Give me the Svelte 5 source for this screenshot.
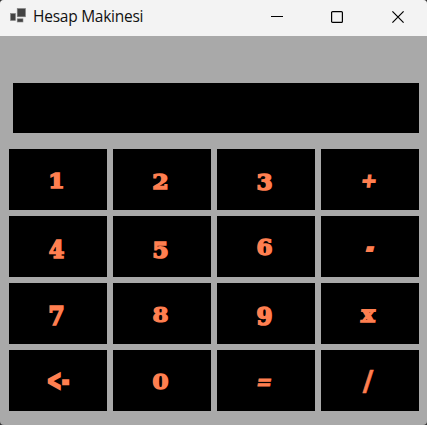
<script>
  const keys = [
    { t: '1', x: -1.5, y: 1, sx: 1.02, sy: 0.88, w: 1.7 },
    { t: '2', x: -1.5, y: 1.5, sx: 1.03, sy: 0.9, w: 1.5 },
    { t: '3', x: -1.5, y: 2, sx: 1.01, sy: 1, w: 1.5 },
    { t: '+', x: -0.5, y: 0, sx: 0.82, sy: 0.82, k: -6, w: 1.8 },
    { t: '4', x: -1.5, y: 2.5, sx: 0.98, sy: 1.08, w: 1.4 },
    { t: '5', x: -1.5, y: 2.5, sx: 1.03, sy: 1, w: 1.6 },
    { t: '6', x: -1.5, y: 0.5, sx: 1, sy: 0.97, w: 1.6 },
    { t: '-', x: 0.8, y: -0.5, sx: 0.9, sy: 1.45, k: -15, w: 1 },
    { t: '7', x: -1.5, y: 2.5, sx: 1.03, sy: 1.1, w: 1.5 },
    { t: '8', x: -1.5, y: 1, sx: 1, sy: 0.9, w: 1.3 },
    { t: '9', x: -1.5, y: 3, sx: 1, sy: 1.06, w: 1.6 },
    { t: 'x', x: -1.5, y: 0, sx: 1, sy: 1.02, k: -5, w: 1.5 },
    { t: '<-', x: -0.5, y: -1, sx: 0.8, sy: 1.25, w: 1.8 },
    { t: '0', x: -1.5, y: 1, sx: 1, sy: 0.86, w: 1.6 },
    { t: '=', x: -1.2, y: 0.5, sx: 0.82, sy: 0.9, k: -10, w: 1 },
    { t: '/', x: -2.3, y: 1, sx: 1.25, sy: 1.18, w: 0.5 }
  ];
</script>

<div class="window">
  <header>
    <svg class="logo" width="18" height="16" viewBox="0 0 18 16">
      <g fill="#424242" stroke="#858585" stroke-width=".6">
        <rect x=".5" y="5.5" width="5" height="7" />
        <rect x="7.2" y=".5" width="8.3" height="8.3" />
        <rect x="7.2" y="10.8" width="5.8" height="3.2" />
      </g>
    </svg>
    <span class="title">Hesap Makinesi</span>
    <nav>
      <svg width="12" height="12" viewBox="0 0 12 12"><path d="M0 5.5H12" /></svg>
      <svg width="12" height="12" viewBox="0 0 12 12"><rect x=".6" y=".6" width="10.8" height="10.8" rx="1" /></svg>
      <svg class="close" width="12" height="12" viewBox="0 0 12 12"><path d="M.4.4 11.6 11.6M11.6.4.4 11.6" /></svg>
    </nav>
  </header>
  <main>
    <div class="display"></div>
    <div class="keys">
      {#each keys as key}
        <button>
          <span style="transform: translate({key.x}px, {key.y}px) skewX({key.k ?? 0}deg) scale({key.sx}, {key.sy}); -webkit-text-stroke-width: {key.w}px">{key.t}</span>
        </button>
      {/each}
    </div>
  </main>
</div>

<style>
  :global(body) { background: #333; overflow: hidden; }
  .window {
    width: 427px;
    height: 425px;
    display: flex;
    flex-direction: column;
    background: #a9a9a9;
    border-radius: 4px;
    overflow: hidden;
  }
  header {
    height: 36px;
    flex: none;
    box-sizing: border-box;
    display: flex;
    align-items: flex-start;
    padding-left: 10px;
    background: #f3f3f3;
  }
  .logo { margin-top: 8px; flex: none; }
  .title {
    margin-left: 5px;
    font: 15.5px/33px "Open Sans", "Noto Sans", sans-serif;
    letter-spacing: -0.25px;
    color: #111;
    white-space: nowrap;
  }
  nav { display: flex; gap: 48px; margin: 11px 23px 0 auto; }
  nav svg { fill: none; stroke: #000; stroke-width: 1.2; }
  nav .close { margin-left: 1px; }
  main { padding: 47px 8px 0 9px; }
  .display { height: 50px; margin: 0 0 16px 4px; background: #000; }
  .keys {
    display: grid;
    grid-template-columns: repeat(4, 98px);
    grid-auto-rows: 61px;
    gap: 6px;
  }
  button {
    display: flex;
    align-items: center;
    justify-content: center;
    padding: 0;
    border: 0;
    background: #000;
    color: #ff7f50;
    font: bold 23px/28px "DejaVu Serif", serif;
  }
  button span { display: block; -webkit-text-stroke-color: #ff7f50; }
</style>
